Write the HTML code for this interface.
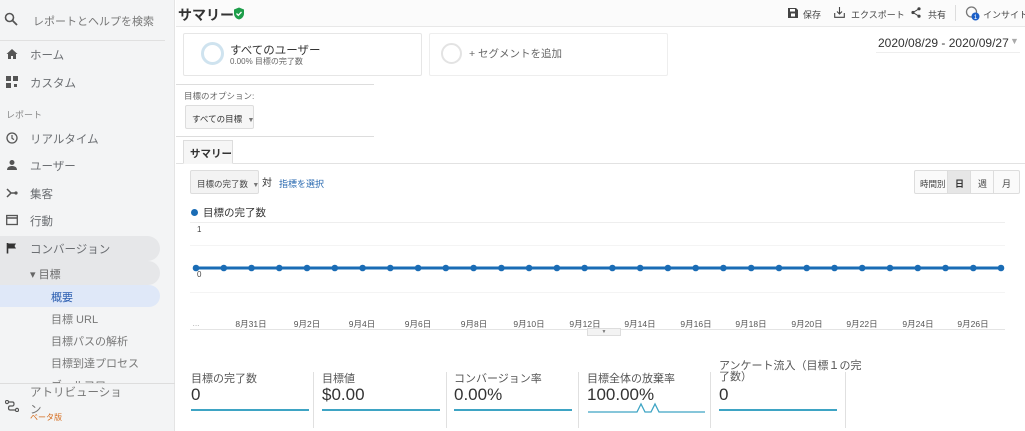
<!DOCTYPE html>
<html><head><meta charset="utf-8"><style>
*{margin:0;padding:0;box-sizing:border-box}
body{width:1025px;height:431px;overflow:hidden;background:#fff;font-family:"Liberation Sans","Noto Sans CJK JP",sans-serif;color:#333;position:relative}
.a{position:absolute;white-space:nowrap}
#sb{position:absolute;left:0;top:0;width:175px;height:431px;background:#f3f4f5;border-right:1px solid #e4e4e4}
.ni{position:absolute;left:30px;font-size:11.5px;color:#6b6e72}
.ic{position:absolute;left:6px;width:12px;height:12px}
.sub{position:absolute;left:51px;font-size:11px;color:#777}
.met{position:absolute;top:370px;font-size:11px;color:#555}
.mv{position:absolute;top:385px;font-size:17px;color:#333}
.sl{position:absolute;top:409px;height:2px;background:#3ea4c4}
.sep{position:absolute;top:372px;width:1px;height:56px;background:#e0e0e0}
.xl{position:absolute;top:318px;font-size:8.5px;color:#555;transform:translateX(-50%)}
</style></head><body>
<div id="sb">
 <svg class="a" style="left:4px;top:12px" width="14" height="14" viewBox="0 0 14 14"><circle cx="5.5" cy="5.5" r="4" fill="none" stroke="#555" stroke-width="1.6"/><path d="M8.5 8.5L13 13" stroke="#555" stroke-width="1.8"/></svg>
 <div class="a" style="left:33px;top:13px;font-size:11px;color:#777">レポートとヘルプを検索</div>
 <div class="a" style="left:0;top:40px;width:165px;height:1px;background:#e0e0e0"></div>
 <svg class="ic" style="top:48px" viewBox="0 0 12 12"><path d="M6 1L0.5 6H2v5h3V8h2v3h3V6h1.5z" fill="#555"/></svg>
 <div class="ni" style="top:47px">ホーム</div>
 <svg class="ic" style="top:76px" viewBox="0 0 12 12"><rect x="0" y="0" width="5" height="5" fill="#555"/><rect x="7" y="0" width="5" height="5" fill="#555"/><rect x="0" y="7" width="5" height="5" fill="#555"/><rect x="8" y="8" width="3" height="3" fill="#555"/></svg>
 <div class="ni" style="top:75px">カスタム</div>
 <div class="a" style="left:6px;top:108px;font-size:9px;color:#888">レポート</div>
 <svg class="ic" style="top:132px" viewBox="0 0 12 12"><circle cx="6" cy="6" r="5" fill="none" stroke="#555" stroke-width="1.3"/><path d="M6 3v3.3l2 1.3" stroke="#555" stroke-width="1.2" fill="none"/></svg>
 <div class="ni" style="top:131px">リアルタイム</div>
 <svg class="ic" style="top:159px" viewBox="0 0 12 12"><circle cx="6" cy="3.5" r="2.5" fill="#555"/><path d="M1 11c0-3 2.5-4 5-4s5 1 5 4z" fill="#555"/></svg>
 <div class="ni" style="top:158px">ユーザー</div>
 <svg class="ic" style="top:187px" viewBox="0 0 12 12"><path d="M1 2l4 4-4 4M5 6h6" stroke="#555" stroke-width="1.5" fill="none"/><circle cx="10" cy="6" r="1.6" fill="#555"/></svg>
 <div class="ni" style="top:186px">集客</div>
 <svg class="ic" style="top:214px" viewBox="0 0 12 12"><rect x="0.7" y="1.5" width="10.6" height="9" fill="none" stroke="#555" stroke-width="1.3"/><path d="M0.7 4h10.6" stroke="#555" stroke-width="1.5"/></svg>
 <div class="ni" style="top:213px">行動</div>
 <div class="a" style="left:0;top:236px;width:160px;height:25px;background:#e6e7e9;border-radius:0 13px 13px 0"></div>
 <svg class="ic" style="top:242px" viewBox="0 0 12 12"><path d="M1.5 1v10.5" stroke="#333" stroke-width="1.6"/><path d="M2 1.5h8l-1.5 2.5 1.5 2.5H2z" fill="#333"/></svg>
 <div class="ni" style="top:241px">コンバージョン</div>
 <div class="a" style="left:0;top:261px;width:160px;height:24px;background:#e6e7e9;border-radius:0 12px 12px 0"></div>
 <div class="a" style="left:30px;top:266px;font-size:11px;color:#666">▾ 目標</div>
 <div class="a" style="left:0;top:285px;width:160px;height:22px;background:#dfe8f8;border-radius:0 11px 11px 0"></div>
 <div class="sub" style="top:289px;color:#2a5db0">概要</div>
 <div class="sub" style="top:311px">目標 URL</div>
 <div class="sub" style="top:333px">目標パスの解析</div>
 <div class="sub" style="top:355px">目標到達プロセス</div>
 <div class="sub" style="top:377px;height:6px;overflow:hidden">ゴールフロー</div>
 <div class="a" style="left:0;top:383px;width:175px;height:1px;background:#ddd"></div>
 <svg class="a" style="left:5px;top:400px" width="14" height="12" viewBox="0 0 14 12"><circle cx="2" cy="2" r="1.6" fill="none" stroke="#555" stroke-width="1.2"/><circle cx="12" cy="10" r="1.6" fill="none" stroke="#555" stroke-width="1.2"/><path d="M3.5 2h4c2 0 2 4 0 4H5c-2 0-2 4 0 4h5" stroke="#555" stroke-width="1.2" fill="none"/></svg>
 <div class="a" style="left:30px;top:385px;font-size:11.5px;color:#777;line-height:17px">アトリビューショ<br>ン</div>
 <div class="a" style="left:30px;top:412px;font-size:8px;color:#d46a1a">ベータ版</div>
</div>

<div class="a" style="left:176px;top:0;width:849px;height:27px;background:#fbfbfb;border-bottom:1px solid #e8e8e8"></div>
<div class="a" style="left:178px;top:5px;font-size:14px;font-weight:bold;color:#333">サマリー</div>
<svg class="a" style="left:233px;top:7px" width="12" height="13" viewBox="0 0 12 13"><path d="M6 0.5L11 2.5v4c0 3-2.2 5.3-5 6-2.8-.7-5-3-5-6v-4z" fill="#1e9e4a"/><path d="M3.5 6.5l1.8 1.8 3.2-3.3" stroke="#fff" stroke-width="1.3" fill="none"/></svg>
<svg class="a" style="left:788px;top:8px" width="10" height="10" viewBox="0 0 10 10"><path d="M0 0h8l2 2v8H0z" fill="#444"/><rect x="2" y="1" width="5" height="2.5" fill="#fff"/><rect x="3" y="5.5" width="4" height="3" fill="#fff"/></svg>
<div class="a" style="left:803px;top:8px;font-size:9px;color:#444">保存</div>
<svg class="a" style="left:834px;top:7px" width="11" height="11" viewBox="0 0 11 11"><path d="M5.5 0v7M3 4.5l2.5 2.5 2.5-2.5M0.7 6v4.3h9.6V6" stroke="#444" stroke-width="1.1" fill="none"/></svg>
<div class="a" style="left:851px;top:8px;font-size:9px;color:#444">エクスポート</div>
<svg class="a" style="left:911px;top:7px" width="10" height="11" viewBox="0 0 10 11"><circle cx="8" cy="1.8" r="1.6" fill="#444"/><circle cx="2" cy="5.5" r="1.6" fill="#444"/><circle cx="8" cy="9.2" r="1.6" fill="#444"/><path d="M8 1.8L2 5.5 8 9.2" stroke="#444" fill="none"/></svg>
<div class="a" style="left:928px;top:8px;font-size:9px;color:#444">共有</div>
<div class="a" style="left:955px;top:5px;width:1px;height:16px;background:#ddd"></div>
<svg class="a" style="left:965px;top:6px" width="16" height="15" viewBox="0 0 16 15"><circle cx="6.5" cy="6" r="5" fill="none" stroke="#777" stroke-width="1.3"/><circle cx="10.5" cy="10.5" r="4" fill="#1a5fc8"/><text x="10.5" y="13" font-size="6.5" fill="#fff" text-anchor="middle" font-family="Liberation Sans">1</text></svg>
<div class="a" style="left:983px;top:8px;font-size:9px;color:#444">インサイト</div>

<div class="a" style="left:183px;top:33px;width:239px;height:43px;border:1px solid #e6e6e6;border-radius:2px"></div>
<div class="a" style="left:201px;top:42px;width:23px;height:23px;border-radius:50%;border:3px solid #cfe3ef"></div>
<div class="a" style="left:230px;top:42px;font-size:11.5px;color:#333">すべてのユーザー</div>
<div class="a" style="left:230px;top:56px;font-size:8px;color:#666">0.00% 目標の完了数</div>
<div class="a" style="left:429px;top:33px;width:239px;height:43px;border:1px solid #eee;border-radius:2px"></div>
<div class="a" style="left:441px;top:43px;width:21px;height:21px;border-radius:50%;border:2.5px solid #e3e3e3"></div>
<div class="a" style="left:469px;top:46px;font-size:10.5px;color:#666">+ セグメントを追加</div>
<div class="a" style="left:878px;top:36px;font-size:12px;color:#333">2020/08/29 - 2020/09/27</div>
<div class="a" style="left:1010px;top:36px;font-size:9px;color:#aaa">▼</div>
<div class="a" style="left:876px;top:52px;width:144px;height:1px;background:#eee"></div>

<div class="a" style="left:176px;top:84px;width:198px;height:1px;background:#ddd"></div>
<div class="a" style="left:184px;top:90px;font-size:8.5px;color:#666">目標のオプション:</div>
<div class="a" style="left:185px;top:105px;width:69px;height:24px;background:#f6f6f6;border:1px solid #ddd;border-radius:2px;font-size:8.5px;color:#333;padding:7px 0 0 6px">すべての目標 <span style="color:#777;font-size:7px;margin-left:3px">▼</span></div>
<div class="a" style="left:176px;top:136px;width:198px;height:1px;background:#ddd"></div>
<div class="a" style="left:176px;top:163px;width:849px;height:1px;background:#e2e2e2"></div>
<div class="a" style="left:183px;top:140px;width:50px;height:24px;background:#f6f6f6;border:1px solid #ddd;border-bottom:1px solid #f6f6f6;font-size:10.5px;font-weight:bold;color:#333;padding:5px 0 0 6px">サマリー</div>

<div class="a" style="left:190px;top:170px;width:69px;height:24px;background:#f3f3f3;border:1px solid #ddd;border-radius:2px;font-size:8.5px;color:#444;padding:7px 0 0 6px">目標の完了数 <span style="color:#777;font-size:7px;margin-left:2px">▼</span></div>
<div class="a" style="left:262px;top:174px;font-size:10px;color:#333">対</div>
<div class="a" style="left:279px;top:177px;font-size:9px;color:#2a6ab0">指標を選択</div>
<div class="a" style="left:914px;top:170px;width:106px;height:24px;border:1px solid #ddd;border-radius:2px;background:#fafafa"></div>
<div class="a" style="left:947px;top:171px;width:24px;height:22px;background:#e6e6e6;border-left:1px solid #ddd;border-right:1px solid #ddd"></div>
<div class="a" style="left:993px;top:171px;width:1px;height:22px;background:#ddd"></div>
<div class="a" style="left:920px;top:178px;font-size:8.5px;color:#444">時間別</div>
<div class="a" style="left:955px;top:177px;font-size:9px;color:#333;font-weight:bold">日</div>
<div class="a" style="left:978px;top:177px;font-size:9px;color:#444">週</div>
<div class="a" style="left:1002px;top:177px;font-size:9px;color:#444">月</div>

<div class="a" style="left:191px;top:209px;width:7px;height:7px;border-radius:50%;background:#1a6cb5"></div>
<div class="a" style="left:203px;top:205px;font-size:10.5px;color:#333">目標の完了数</div>
<div class="a" style="left:190px;top:222px;width:815px;height:1px;background:#eee"></div>
<div class="a" style="left:190px;top:245px;width:815px;height:1px;background:#f4f4f4"></div>
<div class="a" style="left:190px;top:292px;width:815px;height:1px;background:#f4f4f4"></div>
<div class="a" style="left:197px;top:225px;font-size:8px;color:#444">1</div>
<div class="a" style="left:197px;top:270px;font-size:8px;color:#444">0</div>
<svg class="a" style="left:0;top:260px" width="1025" height="16">
<line x1="196" y1="8" x2="1001" y2="8" stroke="#1a6cb5" stroke-width="3"/>
<g fill="#1a6cb5">
<circle cx="196" cy="8" r="3.3"/><circle cx="223.8" cy="8" r="3.3"/><circle cx="251.5" cy="8" r="3.3"/><circle cx="279.3" cy="8" r="3.3"/><circle cx="307" cy="8" r="3.3"/><circle cx="334.8" cy="8" r="3.3"/><circle cx="362.6" cy="8" r="3.3"/><circle cx="390.3" cy="8" r="3.3"/><circle cx="418.1" cy="8" r="3.3"/><circle cx="445.8" cy="8" r="3.3"/><circle cx="473.6" cy="8" r="3.3"/><circle cx="501.4" cy="8" r="3.3"/><circle cx="529.1" cy="8" r="3.3"/><circle cx="556.9" cy="8" r="3.3"/><circle cx="584.6" cy="8" r="3.3"/><circle cx="612.4" cy="8" r="3.3"/><circle cx="640.2" cy="8" r="3.3"/><circle cx="667.9" cy="8" r="3.3"/><circle cx="695.7" cy="8" r="3.3"/><circle cx="723.4" cy="8" r="3.3"/><circle cx="751.2" cy="8" r="3.3"/><circle cx="779" cy="8" r="3.3"/><circle cx="806.7" cy="8" r="3.3"/><circle cx="834.5" cy="8" r="3.3"/><circle cx="862.2" cy="8" r="3.3"/><circle cx="890" cy="8" r="3.3"/><circle cx="917.8" cy="8" r="3.3"/><circle cx="945.5" cy="8" r="3.3"/><circle cx="973.3" cy="8" r="3.3"/><circle cx="1001" cy="8" r="3.3"/>
</g></svg>
<div class="xl" style="left:196px;color:#aaa">...</div>
<div class="xl" style="left:251px">8月31日</div>
<div class="xl" style="left:307px">9月2日</div>
<div class="xl" style="left:362px">9月4日</div>
<div class="xl" style="left:418px">9月6日</div>
<div class="xl" style="left:474px">9月8日</div>
<div class="xl" style="left:529px">9月10日</div>
<div class="xl" style="left:585px">9月12日</div>
<div class="xl" style="left:640px">9月14日</div>
<div class="xl" style="left:696px">9月16日</div>
<div class="xl" style="left:751px">9月18日</div>
<div class="xl" style="left:807px">9月20日</div>
<div class="xl" style="left:862px">9月22日</div>
<div class="xl" style="left:918px">9月24日</div>
<div class="xl" style="left:973px">9月26日</div>
<div class="a" style="left:190px;top:329px;width:815px;height:1px;background:#e4e4e4"></div>
<div class="a" style="left:587px;top:328px;width:34px;height:8px;background:#f3f3f3;border:1px solid #ddd;font-size:5px;color:#777;text-align:center;line-height:6px">▼</div>

<div class="met" style="left:191px">目標の完了数</div>
<div class="mv" style="left:191px">0</div>
<div class="sl" style="left:191px;width:118px"></div>
<div class="sep" style="left:313px"></div>
<div class="met" style="left:322px">目標値</div>
<div class="mv" style="left:322px">$0.00</div>
<div class="sl" style="left:322px;width:118px"></div>
<div class="sep" style="left:446px"></div>
<div class="met" style="left:454px">コンバージョン率</div>
<div class="mv" style="left:454px">0.00%</div>
<div class="sl" style="left:454px;width:118px"></div>
<div class="sep" style="left:578px"></div>
<div class="met" style="left:587px">目標全体の放棄率</div>
<div class="mv" style="left:587px">100.00%</div>
<svg class="a" style="left:587px;top:402px" width="120" height="12"><path d="M1 10H50L54 2L58 10H64L68 2L72 10H118" stroke="#3ea4c4" stroke-width="1.3" fill="none"/></svg>
<div class="sep" style="left:710px"></div>
<div class="a" style="left:719px;top:361px;font-size:11px;color:#555;line-height:11px">アンケート流入（目標１の完<br>了数）</div>
<div class="mv" style="left:719px">0</div>
<div class="sl" style="left:719px;width:118px"></div>
<div class="sep" style="left:845px"></div>
</body></html>
